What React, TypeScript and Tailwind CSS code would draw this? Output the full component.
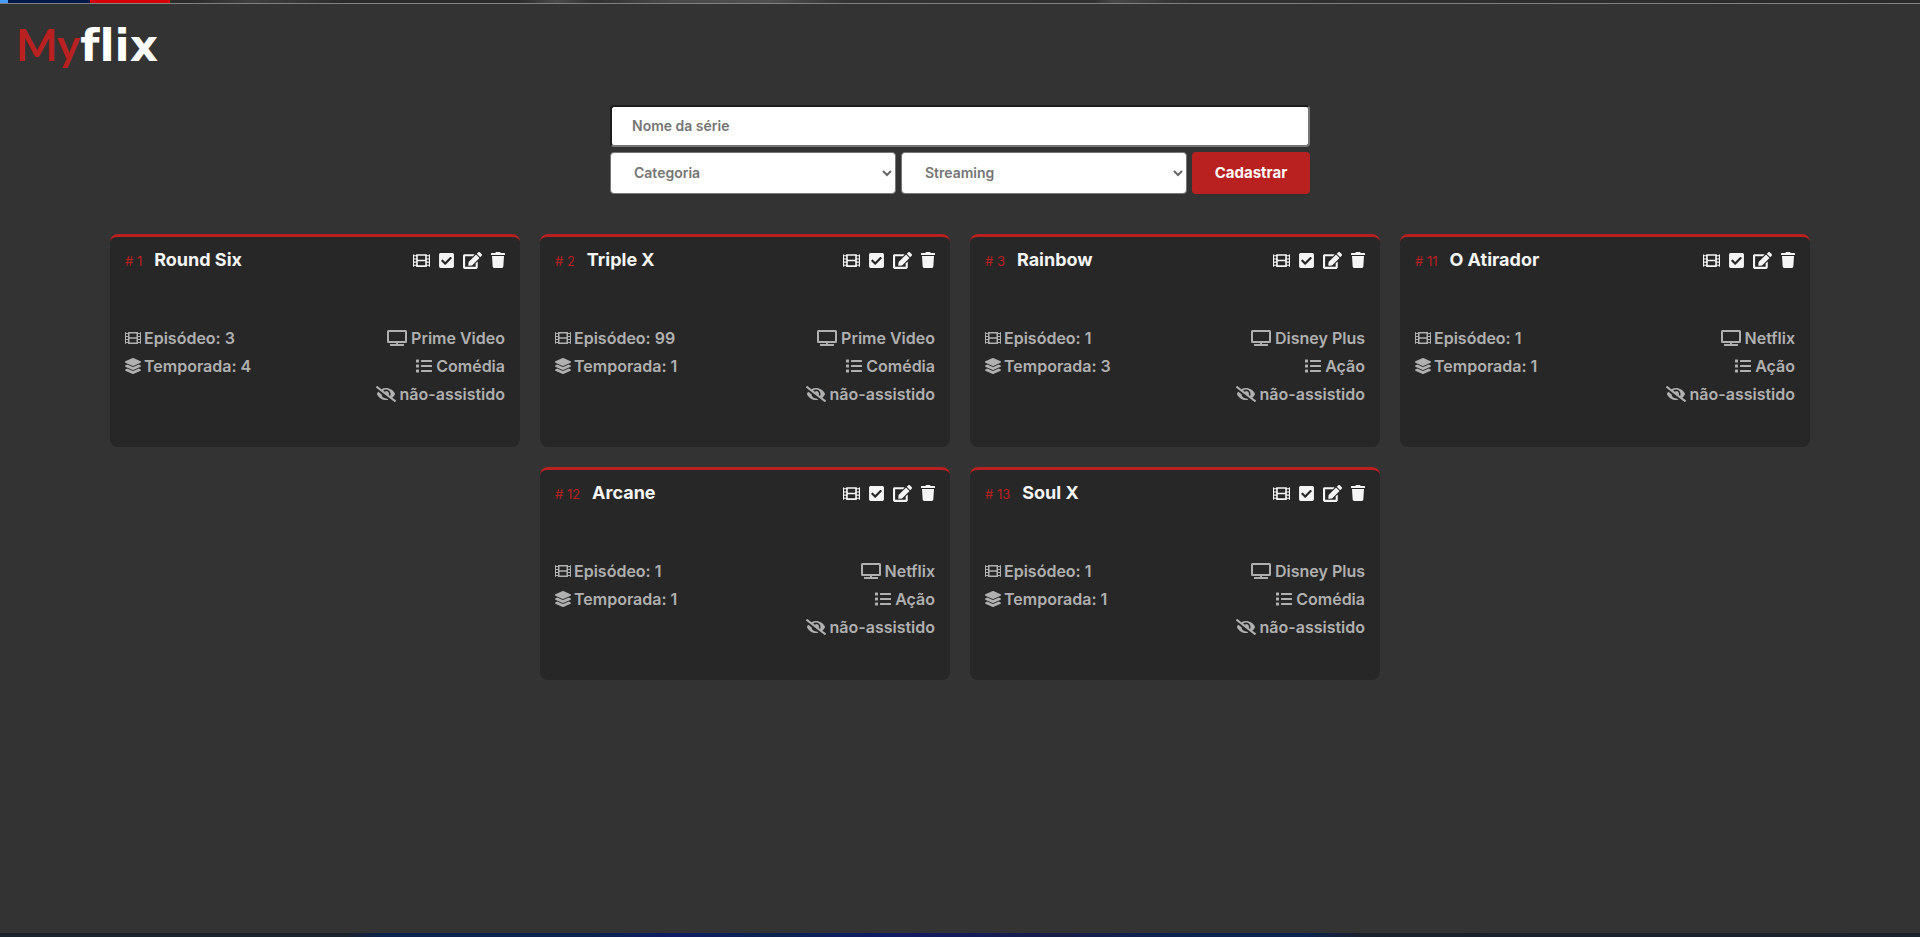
import React from 'react';
import {
  FaCheckSquare,
  FaEdit,
  FaEyeSlash,
  FaFilm,
  FaLayerGroup,
  FaList,
  FaTrash,
  FaTv,
} from 'react-icons/fa';

type Serie = {
  id: number;
  nome: string;
  episodio: number;
  temporada: number;
  streaming: string;
  categoria: string;
};

const series: Serie[] = [
  { id: 1, nome: 'Round Six', episodio: 3, temporada: 4, streaming: 'Prime Video', categoria: 'Comédia' },
  { id: 2, nome: 'Triple X', episodio: 99, temporada: 1, streaming: 'Prime Video', categoria: 'Comédia' },
  { id: 3, nome: 'Rainbow', episodio: 1, temporada: 3, streaming: 'Disney Plus', categoria: 'Ação' },
  { id: 11, nome: 'O Atirador', episodio: 1, temporada: 1, streaming: 'Netflix', categoria: 'Ação' },
  { id: 12, nome: 'Arcane', episodio: 1, temporada: 1, streaming: 'Netflix', categoria: 'Ação' },
  { id: 13, nome: 'Soul X', episodio: 1, temporada: 1, streaming: 'Disney Plus', categoria: 'Comédia' },
];

function SerieCard({ serie }: { serie: Serie }) {
  return (
    <article className="flex h-[213px] w-[410px] flex-col rounded-lg border-t-3 border-[#b92020] bg-[#272727] px-[15px] pt-[11px]">
      <header className="flex items-center justify-between">
        <div className="flex items-baseline gap-3">
          <span className="text-[13px] text-[#b92020]"># {serie.id}</span>
          <h2 className="text-lg leading-6 font-bold text-[#f5f5f5]">{serie.nome}</h2>
        </div>
        <div className="flex items-center gap-[9px] text-[#f5f5f5]">
          <button type="button" aria-label="Episódios"><FaFilm className="h-[17px] w-[17px]" /></button>
          <button type="button" aria-label="Marcar como assistido"><FaCheckSquare className="h-[17px] w-[15px]" /></button>
          <button type="button" aria-label="Editar"><FaEdit className="h-[17px] w-[19px]" /></button>
          <button type="button" aria-label="Excluir"><FaTrash className="h-4 w-[14px]" /></button>
        </div>
      </header>
      <div className="mt-[52px] flex justify-between text-base leading-7 font-semibold text-[#b0b0b0]">
        <ul>
          <li className="flex items-center gap-[3px]"><FaFilm />Episódeo: {serie.episodio}</li>
          <li className="flex items-center gap-[3px]"><FaLayerGroup />Temporada: {serie.temporada}</li>
        </ul>
        <ul className="flex flex-col items-end">
          <li className="flex items-center gap-1"><FaTv className="h-4 w-5" />{serie.streaming}</li>
          <li className="flex items-center gap-1"><FaList />{serie.categoria}</li>
          <li className="flex items-center gap-1"><FaEyeSlash className="h-4 w-5" />não-assistido</li>
        </ul>
      </div>
    </article>
  );
}

function Seletor({ nome, opcoes }: { nome: string; opcoes: string[] }) {
  return (
    <div className="relative flex-1">
      <select
        aria-label={nome}
        defaultValue=""
        className="h-[42px] w-full appearance-none rounded border border-[#767676] bg-white pr-8 pb-px pl-[23px] text-sm font-semibold text-[#757575]"
      >
        <option value="">{nome}</option>
        {opcoes.map((opcao) => (
          <option key={opcao}>{opcao}</option>
        ))}
      </select>
      <svg
        viewBox="0 0 10 7"
        className="pointer-events-none absolute top-[18px] right-1 h-[7px] w-[10px] fill-none stroke-[#666666] stroke-2"
      >
        <path d="M1 1l4 4 4-4" />
      </svg>
    </div>
  );
}

export default function App() {
  return (
    <div className="flex min-h-screen flex-col bg-[#333333] font-['Inter','Liberation_Sans',sans-serif]">
      <div className="flex h-1 border-b border-[#808080] bg-[linear-gradient(90deg,#2b2b2b_10%,#3f3f3f_13%,#2b2b2b_18%,#2b2b2b_27%,#4a4a4a_29%,#303030_31%,#4a4a4a_35%,#505050_40%,#333333_44%,#303030_57%,#484848_58%,#303030_62%,#2b2b2b_100%)]">
        <span className="w-2 bg-[#4a9bff]" />
        <span className="w-[82px] bg-[#00194a]" />
        <span className="w-20 bg-[#d60000]" />
      </div>
      <h1 className="mt-[14px] ml-4 flex h-[54px] items-baseline text-[44px] leading-[52px] text-white [font-variant-ligatures:none]">
        <span className="font-['Lato',sans-serif] font-bold text-[#b92020]">My</span>
        <span className="font-['DejaVu_Sans',sans-serif] font-bold">flix</span>
      </h1>
      <form className="mx-auto mt-[33px] flex w-full max-w-[700px] flex-col gap-[5px]">
        <input
          type="text"
          aria-label="Nome da série"
          placeholder="Nome da série"
          className="h-[42px] w-full rounded border-2 border-t-[#1c1c1c] border-r-[#767676] border-b-[#767676] border-l-[#1c1c1c] bg-white px-5 pb-px text-sm font-semibold placeholder:text-[#757575]"
        />
        <div className="flex gap-[5px]">
          <Seletor nome="Categoria" opcoes={['Ação', 'Comédia']} />
          <Seletor nome="Streaming" opcoes={['Disney Plus', 'Netflix', 'Prime Video']} />
          <button type="button" className="h-[42px] w-[118px] rounded bg-[#b92020] text-[15px] font-bold text-white">
            Cadastrar
          </button>
        </div>
      </form>
      <main className="mt-10 mb-10 flex flex-wrap justify-center gap-5 px-[100px]">
        {series.map((serie) => (
          <SerieCard key={serie.id} serie={serie} />
        ))}
      </main>
      <div className="mt-auto h-1 bg-[linear-gradient(90deg,#1a222c_0%,#1a222c_18%,#0c2350_20%,#0c2350_31%,#0f1a66_35%,#0c2350_40%,#0f1a66_46%,#161d48_55%,#0c2350_62%,#0c2350_68%,#1a1f2c_71%,#1a222c_100%)]" />
    </div>
  );
}
